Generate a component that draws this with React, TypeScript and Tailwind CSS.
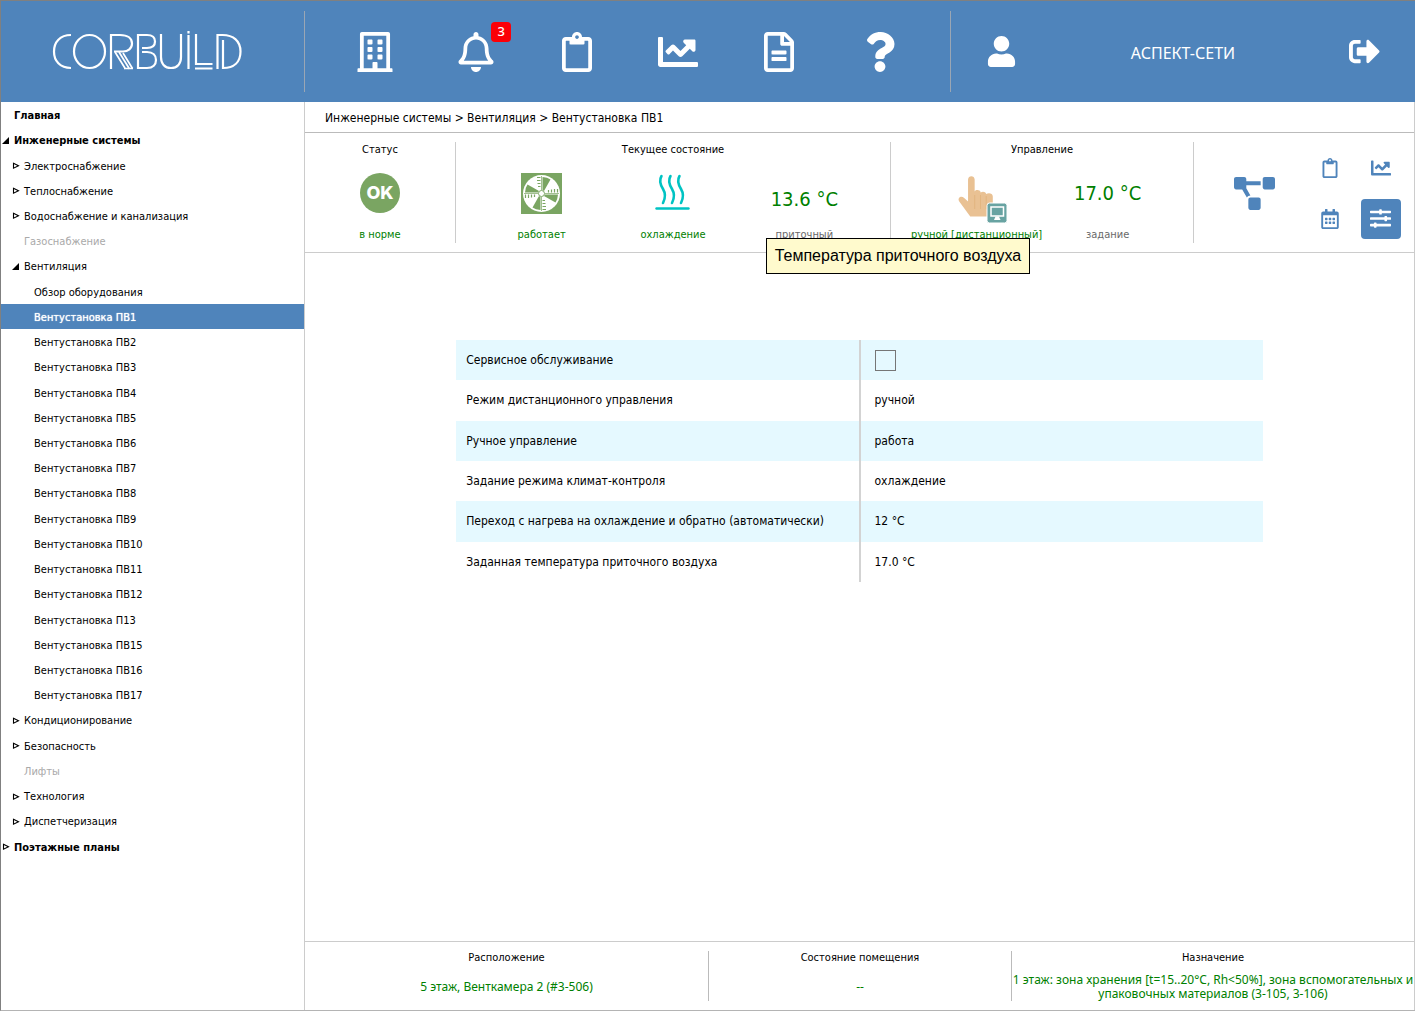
import type { ReactNode } from 'react';
import {
  FaChartLine,
  FaProjectDiagram,
  FaQuestion,
  FaRegBell,
  FaRegBuilding,
  FaRegCalendarAlt,
  FaRegClipboard,
  FaRegFileAlt,
  FaSignOutAlt,
  FaSlidersH,
  FaUser,
} from 'react-icons/fa';

type TreeState = 'open' | 'closed' | 'leaf';

interface TreeItem {
  label: string;
  level: 0 | 1 | 2;
  state: TreeState;
  active?: boolean;
  disabled?: boolean;
}

const units = ['ПВ2', 'ПВ3', 'ПВ4', 'ПВ5', 'ПВ6', 'ПВ7', 'ПВ8', 'ПВ9', 'ПВ10', 'ПВ11', 'ПВ12', 'П13', 'ПВ15', 'ПВ16', 'ПВ17'];

const tree: TreeItem[] = [
  { label: 'Главная', level: 0, state: 'leaf' },
  { label: 'Инженерные системы', level: 0, state: 'open' },
  { label: 'Электроснабжение', level: 1, state: 'closed' },
  { label: 'Теплоснабжение', level: 1, state: 'closed' },
  { label: 'Водоснабжение и канализация', level: 1, state: 'closed' },
  { label: 'Газоснабжение', level: 1, state: 'leaf', disabled: true },
  { label: 'Вентиляция', level: 1, state: 'open' },
  { label: 'Обзор оборудования', level: 2, state: 'leaf' },
  { label: 'Вентустановка ПВ1', level: 2, state: 'leaf', active: true },
  ...units.map((u): TreeItem => ({ label: `Вентустановка ${u}`, level: 2, state: 'leaf' })),
  { label: 'Кондиционирование', level: 1, state: 'closed' },
  { label: 'Безопасность', level: 1, state: 'closed' },
  { label: 'Лифты', level: 1, state: 'leaf', disabled: true },
  { label: 'Технология', level: 1, state: 'closed' },
  { label: 'Диспетчеризация', level: 1, state: 'closed' },
  { label: 'Поэтажные планы', level: 0, state: 'closed' },
];

const indents = { 0: 'pl-0', 1: 'pl-[10px]', 2: 'pl-5' };

function Logo() {
  return (
    <svg width="190" height="42" viewBox="0 0 190 42" fill="none" stroke="white" strokeWidth="2.200" role="img" aria-label="CORBUILD">
      <path d="M19 5C8 5 2 12 2 21.500S8 38 19 38" />
      <ellipse cx="37.500" cy="21.500" rx="15.500" ry="16.500" />
      <path d="M59 39V5h9c8 0 12 3.500 12 8.500s-4 8-9 8h-9" />
      <path d="M63 22l10.500 17M67 22l10.500 17M71 23l9.500 15.500M72 38.500h9" strokeWidth="1.700" />
      <path d="M90 18h5c5 0 8-2.500 8-6.500S100 5 95 5h-9v33h9c6 0 9-3.500 9-8s-3-8-9-8h-5" />
      <path d="M109 4v23c0 7 4 11 10 11s10-4 10-11V4" />
      <path d="M136.500 5v34M136.500 1v2.500" />
      <path d="M144 4v30h16.500M143 38.500h17.500" />
      <path d="M165.500 39V5h5c11 0 18 6 18 16.500S182 38 171 38V10" />
    </svg>
  );
}

function Arrow({ state }: { state: TreeState }) {
  return (
    <svg width="8" height="8" viewBox="0 0 8 8" className="shrink-0" aria-hidden="true">
      {state === 'open' && <path d="M7 0v7H0z" fill="black" />}
      {state === 'closed' && <path d="M1.500 1.300L6.500 3.700L1.500 6.200z" fill="white" stroke="black" strokeWidth="1.100" />}
    </svg>
  );
}

function Sidebar() {
  return (
    <nav aria-label="Разделы" className="flex w-[304px] shrink-0 border-r border-[#cccccc]">
      <ul className="grid flex-1 grid-rows-[repeat(36,minmax(0,1fr))] text-[11px] leading-4">
        {tree.map((item) => (
          <li key={item.label} className="flex">
            <button
              type="button"
              disabled={item.disabled}
              aria-current={item.active ? 'page' : undefined}
              className={`flex flex-1 items-center pt-[3px] ${indents[item.level]} ${
                item.active
                  ? 'bg-[#4f84bb] text-white [text-shadow:0_0_1px_white]'
                  : item.disabled
                    ? 'text-[#a9a9a9]'
                    : 'text-black'
              } ${item.level === 0 ? 'font-bold' : ''}`}
            >
              <span className="flex w-[13px] shrink-0 pb-px pl-px">
                <Arrow state={item.state} />
              </span>
              {item.label}
            </button>
          </li>
        ))}
      </ul>
    </nav>
  );
}

function NavButton({ label, children }: { label: string; children: ReactNode }) {
  return (
    <button type="button" aria-label={label} className="flex flex-1 items-center justify-center">
      {children}
    </button>
  );
}

function Header() {
  return (
    <header className="flex h-[101px] shrink-0 bg-[#4f84bb] font-['Noto_Sans',sans-serif] text-white">
      <div className="flex w-[303px] shrink-0 items-center justify-center pr-3 pb-[2px]">
        <a href="#home">
          <Logo />
        </a>
      </div>
      <div className="my-[10px] flex flex-1 border-x border-[#9aa6b4] px-5">
        <NavButton label="Здание"><FaRegBuilding size={40} /></NavButton>
        <NavButton label="Тревоги">
          <span className="relative">
            <FaRegBell size={40} />
            <span className="absolute -top-[10px] left-[35px] flex h-5 w-5 items-center justify-center rounded bg-[#fb0007] text-[13px] leading-none font-medium">3</span>
          </span>
        </NavButton>
        <NavButton label="Журнал"><FaRegClipboard size={40} /></NavButton>
        <NavButton label="Графики"><FaChartLine size={40} /></NavButton>
        <NavButton label="Отчёты"><FaRegFileAlt size={40} /></NavButton>
        <NavButton label="Справка"><FaQuestion size={40} /></NavButton>
      </div>
      <div className="flex w-[464px] items-center">
        <button type="button" aria-label="Пользователь" className="flex w-[101px] justify-center">
          <FaUser size={31} />
        </button>
        <span className="flex-1 pt-[2px] text-center text-[16px] leading-6">АСПЕКТ-СЕТИ</span>
        <button type="button" aria-label="Выход" className="flex w-[101px] justify-center">
          <FaSignOutAlt size={31} />
        </button>
      </div>
    </header>
  );
}

function OkIcon() {
  return (
    <span className="flex h-10 w-10 items-center justify-center rounded-full bg-[#7aa562] font-['Inter',sans-serif] text-[18px] leading-none font-extrabold text-white">
      OK
    </span>
  );
}

function FanIcon() {
  return (
    <svg width="41" height="41" viewBox="0 0 41 41" aria-hidden="true">
      <rect width="41" height="41" fill="#7aa562" />
      <circle cx="20.500" cy="20.500" r="18.500" fill="white" />
      {[0, 90, 180, 270].map((a) => (
        <g key={a} transform={`rotate(${a} 20.500 20.500)`}>
          <path d="M21.500 17V4q5 .3 8 2.500L23 18z" fill="#7aa562" />
          <path d="M16 4.500h3.500M16 7.500h3.500M16.500 10.500h3M17 13.500h2.500" stroke="#7aa562" strokeWidth="1.200" />
          <path d="M20.500 3v14" stroke="#7aa562" strokeWidth="0.700" />
        </g>
      ))}
      <circle cx="20.500" cy="20.500" r="3" fill="white" stroke="#7aa562" strokeWidth="1" />
    </svg>
  );
}

function HeatIcon() {
  return (
    <svg width="36" height="40" viewBox="0 0 36 40" fill="none" stroke="#00c3c3" strokeWidth="2.600" strokeLinecap="round" aria-hidden="true">
      <path d="M6.500 3c-3 5-1 9 1.500 13s2.500 9 0 14" />
      <path d="M15.500 3c-3 5-1 9 1.500 13s2.500 9 0 14" />
      <path d="M24.500 3c-3 5-1 9 1.500 13s2.500 9 0 14" />
      <path d="M1.500 35.500h32" strokeWidth="2.400" />
    </svg>
  );
}

function HandIcon() {
  return (
    <svg width="60" height="50" viewBox="0 0 60 50" aria-hidden="true">
      <g transform="translate(9.500 0) scale(1.100 1)">
        <path
          d="M12.500 42.500L2.500 27.500c-2-3.500 1.500-6.500 4.500-3.500l3.500 3.500V5.500c0-4.500 6-4.500 6 0V17.500c1-2 5-2 5.500 1 1.500-1.500 4.500-1 5 1.500 2-1.500 6-1 6 2.500V37c0 3-1 4-2 5.500z"
          fill="#e9c193"
        />
        <path d="M16.500 21v14M21.800 21v14M27 22v13" stroke="#dfb179" strokeWidth="0.700" />
      </g>
      <rect x="40" y="29" width="20" height="20" rx="2.500" fill="#68a3a2" stroke="white" strokeWidth="1" />
      <path d="M44 33h12.500v9H44z" fill="none" stroke="white" strokeWidth="1.500" />
      <path d="M48.500 42.500h3.500l1.500 3.500h-6.500z" fill="white" />
    </svg>
  );
}

function Indicator({ icon, label, gray, children }: { icon: ReactNode; label: string; gray?: boolean; children?: ReactNode }) {
  return (
    <div className="relative flex flex-1 flex-col items-center">
      <div className="flex h-[60px] items-center">{icon}</div>
      <span className={`pt-1 leading-4 whitespace-nowrap ${gray ? 'text-[#696969]' : 'text-[#008000]'}`}>{label}</span>
      {children}
    </div>
  );
}

function Panel({ title, children }: { title: string; children: ReactNode }) {
  return (
    <section className="my-[9px] flex flex-col border-r border-[#cccccc] px-5">
      <h2 className="text-center leading-4">{title}</h2>
      <div className="flex pt-[5px]">{children}</div>
    </section>
  );
}

function StatusBar() {
  return (
    <div className="grid h-[120px] grid-cols-[151fr_435fr_303fr_220fr] border-b border-[#cccccc] text-[11px]">
      <Panel title="Статус">
        <Indicator icon={<OkIcon />} label="в норме" />
      </Panel>
      <Panel title="Текущее состояние">
        <Indicator icon={<FanIcon />} label="работает" />
        <Indicator icon={<HeatIcon />} label="охлаждение" />
        <Indicator icon={<span className="pt-3 text-[20px] leading-6 text-[#008000]">13.6 °C</span>} label="приточный" gray>
          <div role="tooltip" className="absolute top-[75px] left-[27px] z-10 border border-black bg-[#fffacd] px-2 py-[5px] font-['Liberation_Sans',sans-serif] text-[16px] leading-6 whitespace-nowrap text-black">
            Температура приточного воздуха
          </div>
        </Indicator>
      </Panel>
      <Panel title="Управление">
        <Indicator icon={<span className="pt-3"><HandIcon /></span>} label="ручной [дистанционный]" />
        <Indicator icon={<span className="text-[20px] leading-6 text-[#008000]">17.0 °C</span>} label="задание" gray />
      </Panel>
      <div className="grid grid-cols-[2fr_1fr_1fr] grid-rows-2 items-center justify-items-center pt-[10px] pr-2 pb-2 pl-[10px] text-[#4f84bb]">
        <button type="button" aria-label="Схема" className="row-span-2"><FaProjectDiagram size={41} /></button>
        <button type="button" aria-label="Журнал установки"><FaRegClipboard size={20} /></button>
        <button type="button" aria-label="График установки"><FaChartLine size={20} /></button>
        <button type="button" aria-label="Расписание"><FaRegCalendarAlt size={20} /></button>
        <button type="button" aria-label="Настройки" className="flex h-10 w-10 items-center justify-center rounded bg-[#4f84bb] text-white">
          <FaSlidersH size={21} />
        </button>
      </div>
    </div>
  );
}

const settings: [string, string | null][] = [
  ['Сервисное обслуживание', null],
  ['Режим дистанционного управления', 'ручной'],
  ['Ручное управление', 'работа'],
  ['Задание режима климат-контроля', 'охлаждение'],
  ['Переход с нагрева на охлаждение и обратно (автоматически)', '12 °C'],
  ['Заданная температура приточного воздуха', '17.0 °C'],
];

function Settings() {
  return (
    <div className="flex-1 pt-[87px]">
      <table className="mx-auto h-[242px] w-8/11 table-fixed border-collapse text-[12px] leading-4">
        <tbody>
          {settings.map(([name, value]) => (
            <tr key={name} className="h-10 odd:bg-[#e5f9ff]">
              <th scope="row" className="w-1/2 border-r-2 border-[#d3d3d3] py-0 pr-0 pl-[10px] text-left font-normal">
                {value === null ? <label htmlFor="service">{name}</label> : name}
              </th>
              <td className="py-0 pr-0 pl-[14px]">
                {value === null ? (
                  <input id="service" type="checkbox" className="block h-[21px] w-[21px] appearance-none border border-[#767676] bg-transparent" />
                ) : (
                  value
                )}
              </td>
            </tr>
          ))}
        </tbody>
      </table>
    </div>
  );
}

function Fact({ title, last, children }: { title: string; last?: boolean; children: ReactNode }) {
  return (
    <section className={`flex flex-col text-center ${last ? '' : 'border-r border-[#bbbbbb]'}`}>
      <h2 className="text-[11px] leading-[14px]">{title}</h2>
      <p className="flex flex-1 items-center justify-center pt-2 font-['Noto_Sans',sans-serif] text-[12px] leading-[14px] text-[#008000]">
        {children}
      </p>
    </section>
  );
}

export default function App() {
  return (
    <div className="flex min-h-screen flex-col border-t border-b border-l border-t-[#808080] border-b-[#b4b4b4] border-l-[#808080] bg-white font-['DejaVu_Sans_Condensed','Noto_Sans',sans-serif] text-black">
      <Header />
      <div className="flex flex-1">
        <Sidebar />
        <main className="flex min-w-0 flex-1 flex-col border-r border-[#cccccc]">
          <div className="flex h-[31px] items-center border-b border-[#bbbbbb] pt-[2px] pl-5 text-[12px] leading-4">
            Инженерные системы &gt; Вентиляция &gt; Вентустановка ПВ1
          </div>
          <StatusBar />
          <Settings />
          <footer className="grid h-[69px] grid-cols-[404fr_303fr_402fr] border-t border-[#cccccc] py-[9px]">
            <Fact title="Расположение">5 этаж, Венткамера 2 (#3-506)</Fact>
            <Fact title="Состояние помещения">--</Fact>
            <Fact title="Назначение" last>
              1 этаж: зона хранения [t=15..20°C, Rh&lt;50%], зона вспомогательных и упаковочных материалов (3-105, 3-106)
            </Fact>
          </footer>
        </main>
      </div>
    </div>
  );
}
